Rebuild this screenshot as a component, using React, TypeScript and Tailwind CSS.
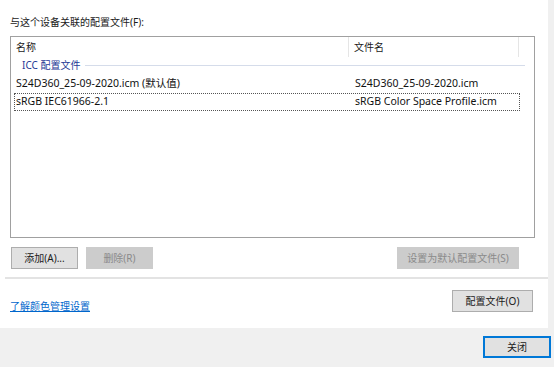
const font = { fontFamily: '"Noto Sans", "Noto Sans CJK SC", sans-serif' };

const WinButton = ({ label, disabled, className = '' }: { label: string; disabled?: boolean; className?: string }) => (
    <div
        className={`h-[22px] flex items-center justify-center text-[10px] whitespace-nowrap border ${disabled ? 'bg-[#cccccc] border-[#cccccc] text-[#8a8a8a]' : 'bg-[#e1e1e1] border-[#adadad] text-[#1a1a1a]'} ${className}`}
    >
        {label}
    </div>
);

export default function App() {
    return (
        <div className="w-[554px] h-[367px] bg-[#f0f0f0] flex flex-col overflow-hidden" style={font}>
            <div className="w-[548px] h-[328px] bg-white flex flex-col shrink-0">
                <div className="pl-[10px] pt-[15px] text-[10px] text-[#1a1a1a] leading-[14px]">与这个设备关联的配置文件(F):</div>

                <div className="ml-[10px] mt-[7px] w-[525px] h-[202px] border border-[#a0a0a0] flex flex-col">
                    <div className="flex h-[20px] text-[10px] text-[#1a1a1a] items-center">
                        <div className="w-[338px] h-full pl-[5px] flex items-center border-r border-[#e5e5e5]">名称</div>
                        <div className="w-[170px] h-full pl-[5px] flex items-center border-r border-[#e5e5e5]">文件名</div>
                    </div>
                    <div className="flex items-center h-[17px] pl-[11px] text-[10px] text-[#1e3a96]">
                        <span>ICC 配置文件</span>
                        <div className="ml-[5px] mr-[9px] flex-1 h-px bg-[#d5dcea]"></div>
                    </div>
                    <div className="flex h-[18px] items-center text-[10.5px] text-[#111111] mt-[1px]">
                        <div className="w-[339px] pl-[5px]">S24D360_25-09-2020.icm (默认值)</div>
                        <div className="pl-[5px]">S24D360_25-09-2020.icm</div>
                    </div>
                    <div className="flex h-[18px] items-center text-[10.5px] text-[#111111] ml-[3px] w-[506px] border border-dotted border-[#555555]">
                        <div className="w-[335px] pl-[1px]">sRGB IEC61966-2.1</div>
                        <div className="pl-[5px]">sRGB Color Space Profile.icm</div>
                    </div>
                </div>

                <div className="flex mt-[9px] pl-[11px] pr-[29px]">
                    <WinButton label="添加(A)..." className="w-[67px]" />
                    <WinButton label="删除(R)" disabled className="w-[67px] ml-[8px]" />
                    <div className="flex-1"></div>
                    <WinButton label="设置为默认配置文件(S)" disabled className="w-[122px]" />
                </div>

                <div className="ml-[5px] mt-[8px] h-[2px] bg-[#e3e3e3]"></div>

                <div className="flex items-start mt-[11px] pl-[10px] pr-[15px]">
                    <div className="mt-[9px] text-[10px] text-[#0066cc] underline leading-[14px]">了解颜色管理设置</div>
                    <div className="flex-1"></div>
                    <WinButton label="配置文件(O)" className="w-[81px]" />
                </div>
            </div>

            <div className="flex justify-end pr-[3px] pt-[8px]">
                <div className="w-[68px] h-[22px] flex items-center justify-center text-[10px] text-[#1a1a1a] bg-[#e1e1e1] border-2 border-[#0078d7]">
                    关闭
                </div>
            </div>
        </div>
    );
}
